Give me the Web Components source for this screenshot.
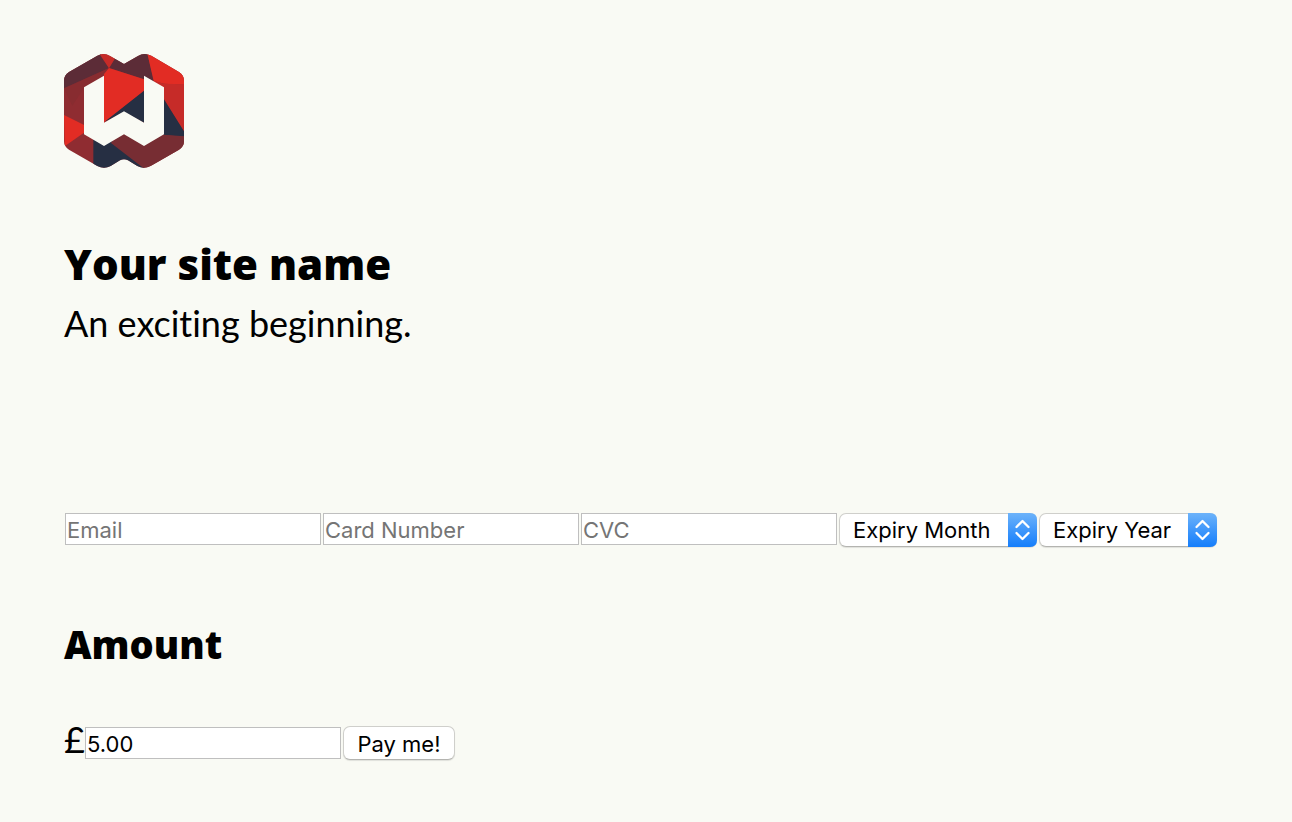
<!DOCTYPE html>
<html lang="en">
<head>
<meta charset="utf-8">
<meta name="viewport" content="width=device-width, initial-scale=1">
<title>Your site name</title>
<style>
  body { margin: 0; background: #f9faf4; color: #000; font-family: Lato, "Open Sans", sans-serif; }
</style>
</head>
<body>
<payment-page>
  <site-header slot="header">
    <span slot="name">Your site name</span>
    <span slot="tagline">An exciting beginning.</span>
  </site-header>
  <payment-form></payment-form>
</payment-page>

<script>
const controlStyles = `
  .field, .choice, button {
    box-sizing: border-box; margin: 0;
    font: 22px/28px Inter, sans-serif; color: #000;
  }
  .field {
    width: 256px; height: 32px; padding: 2px 1px 0;
    border: 1px solid #bfbfbf; border-radius: 0; background: #fff; outline: none;
  }
  .field::placeholder { color: #757575; opacity: 1; }
  .choice, button {
    height: 34px; border: 1px solid #cfcfcb; border-bottom-color: #b4b4b0;
    border-radius: 7px; background: #fff; box-shadow: 0 1px 1px #0000001a;
  }
`;

class SiteLogo extends HTMLElement {
  constructor() {
    super();
    this.attachShadow({ mode: "open" }).innerHTML = `
      <style>:host { display: block; width: 120px; height: 114px } svg { display: block; width: 100%; height: 100% }</style>
      <svg viewBox="30 30 360 342" role="img" aria-label="Logo">
        <defs><clipPath id="outline"><path d="M130 35Q150 25 168 36L210 60L252 36Q270 25 292 35L375 84Q390 93 390 110V292Q390 308 375 317L290 366Q270 377 250 366L222 349Q210 342 198 349L170 366Q150 377 130 366L45 317Q30 308 30 292V110Q30 93 45 84Z"/></clipPath></defs>
        <g clip-path="url(#outline)">
          <path fill="#8f2c31" d="M30 20H390V380H30z"/>
          <path fill="#5c2c37" d="M30 133V60L137 25L165 72zM165 72L183 42L230 20H278L300 112L270 106z"/>
          <path fill="#822b30" d="M30 133L165 72L150 98L90 131L55 185z" opacity=".5"/>
          <path fill="#c62b28" d="M135 28L150 20L186 38L165 73z"/>
          <path fill="#e22c24" d="M278 20H390V122L330 119L299 111zM165 72L270 106V142L150 236V90zM30 213L92 244V265L32 307z"/>
          <path fill="#c62b28" d="M299 110L330 119L390 121V264L328 163z"/>
          <path fill="#262f43" d="M150 235L270 140V236L210 204zM328 163L390 262V278L328 273zM118 280L175 292L275 375H118z"/>
          <path fill="#772d33" d="M328 272L390 277V320L272 375L170 296L210 265L270 300z"/>
          <path fill="#f9faf4" d="M150 95L90 130V271L150 306L210 271L270 306L330 271V130L270 95V236L210 202L150 236z"/>
        </g>
      </svg>`;
  }
}
customElements.define("site-logo", SiteLogo);

class SiteHeader extends HTMLElement {
  constructor() {
    super();
    this.attachShadow({ mode: "open" }).innerHTML = `
      <style>
        :host { display: block }
        h1 { margin: 68px 0 0; font: 800 42px/56px "Open Sans", sans-serif }
        p { margin: 8px 0 0; font-size: 36px; line-height: 46px; font-variant-ligatures: none }
      </style>
      <site-logo></site-logo>
      <h1><slot name="name"></slot></h1>
      <p><slot name="tagline"></slot></p>`;
  }
}
customElements.define("site-header", SiteHeader);

class TextField extends HTMLElement {
  connectedCallback() {
    if (this.shadowRoot) return;
    this.attachShadow({ mode: "open" }).innerHTML = `
      <style>:host { display: block }${controlStyles}</style>
      <input class="field" type="text">`;
    const input = this.shadowRoot.querySelector("input");
    input.placeholder = this.getAttribute("placeholder") || "";
    input.value = this.getAttribute("value") || "";
    input.setAttribute("aria-label", this.getAttribute("label"));
  }
}
customElements.define("text-field", TextField);

class ChoiceField extends HTMLElement {
  connectedCallback() {
    if (this.shadowRoot) return;
    const label = this.getAttribute("label");
    this.attachShadow({ mode: "open" }).innerHTML = `
      <style>
        :host { display: grid }
        ${controlStyles}
        .choice, svg { grid-area: 1 / 1 }
        .choice { appearance: none; padding: 0 40px 0 13px; width: 100% }
        svg { justify-self: end; width: 29px; height: 34px; pointer-events: none }
      </style>
      <select class="choice" aria-label="${label}"><option>${label}</option></select>
      <svg viewBox="0 0 29 34" aria-hidden="true">
        <defs><linearGradient id="blue" x2="0" y2="1"><stop stop-color="#6db3fa"/><stop offset=".5" stop-color="#3f97fb"/><stop offset="1" stop-color="#157efb"/></linearGradient></defs>
        <path fill="url(#blue)" d="M0 0H22Q29 0 29 7V27Q29 34 22 34H0z"/>
        <path d="M8.500 14L14.500 8L20.500 14M8.500 20L14.500 26L20.500 20" fill="none" stroke="#fff" stroke-width="2.300" stroke-linecap="round" stroke-linejoin="round"/>
      </svg>`;
  }
}
customElements.define("choice-field", ChoiceField);

class PaymentForm extends HTMLElement {
  constructor() {
    super();
    this.attachShadow({ mode: "open" }).innerHTML = `
      <style>
        :host { display: block }
        ${controlStyles}
        .row { display: flex; flex-wrap: wrap; gap: 2px; align-items: flex-start }
        .card { padding-left: 1px }
        .month { width: 198px }
        .year { width: 178px }
        h2 { margin: 72px 0 0; font: 800 38px/50px "Open Sans", sans-serif }
        .amount { margin-top: 57px }
        .currency { width: 19px; font-size: 36px; line-height: 26px }
        text-field { margin-top: 1px }
        .card text-field { margin-top: 0 }
        button { width: 112px; padding: 2px 0 0 }
      </style>
      <form>
        <div class="row card">
          <text-field label="Email" placeholder="Email"></text-field>
          <text-field label="Card Number" placeholder="Card Number"></text-field>
          <text-field label="CVC" placeholder="CVC"></text-field>
          <choice-field class="month" label="Expiry Month"></choice-field>
          <choice-field class="year" label="Expiry Year"></choice-field>
        </div>
        <h2>Amount</h2>
        <div class="row amount">
          <span class="currency">£</span>
          <text-field label="Amount" value="5.00"></text-field>
          <button type="button">Pay me!</button>
        </div>
      </form>`;
  }
}
customElements.define("payment-form", PaymentForm);

class PaymentPage extends HTMLElement {
  constructor() {
    super();
    this.attachShadow({ mode: "open" }).innerHTML = `
      <style>
        :host { display: block; padding: 54px 64px }
        main { margin-top: 167px }
      </style>
      <header><slot name="header"></slot></header>
      <main><slot></slot></main>`;
  }
}
customElements.define("payment-page", PaymentPage);
</script>
</body>
</html>
